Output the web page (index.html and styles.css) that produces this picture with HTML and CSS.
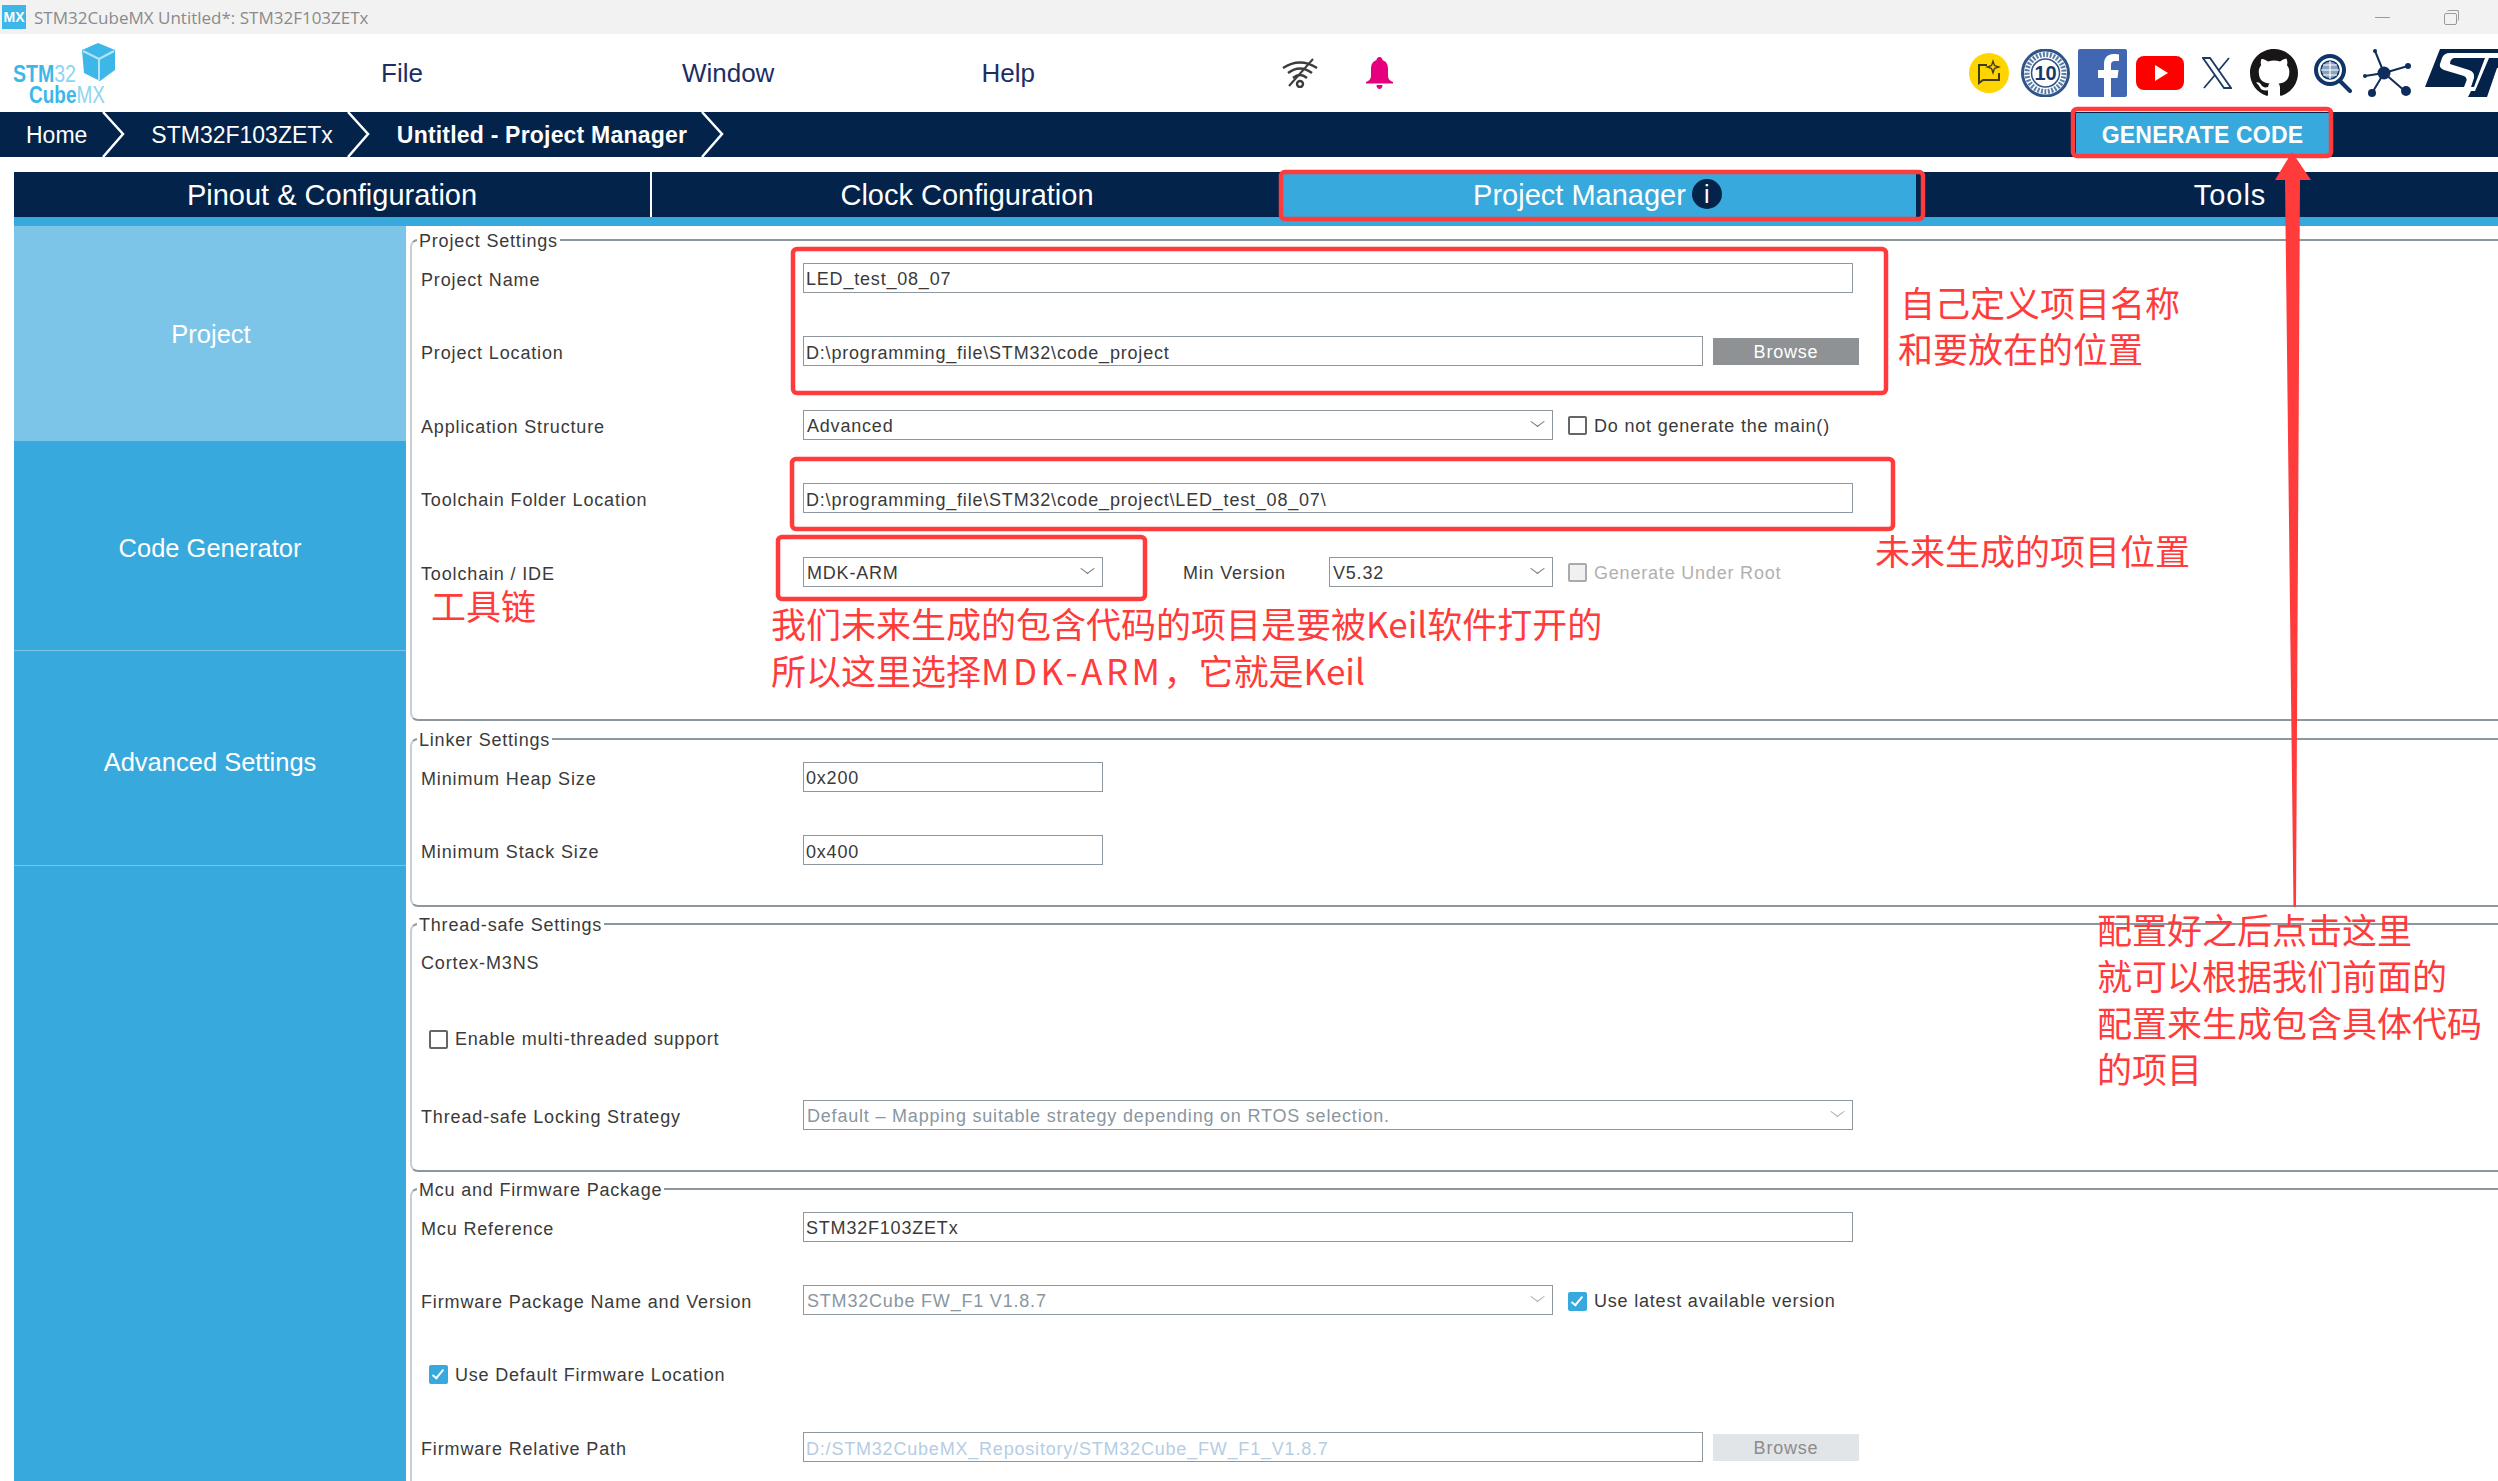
FILE: index.html
```html
<!DOCTYPE html>
<html lang="en">
<head>
    <meta charset="UTF-8">
    <meta name="viewport" content="width=device-width, initial-scale=1.0">
    <title>STM32CubeMX Untitled*: STM32F103ZETx</title>
    <link rel="stylesheet" href="styles.css">
</head>
<body>
    <div class="titlebar">
        <div class="app-icon">MX</div>
        <div class="app-title">STM32CubeMX Untitled*: STM32F103ZETx</div>
        <div class="win-min"></div>
        <div class="win-restore"></div>
    </div>

    <div class="topbar">
        <svg class="logo" width="120" height="78" viewBox="0 0 120 78">
            <path fill="#3db7e8" d="M82 16 L98 9 L115 16 L115 36 L100 47 L84 39 Z"/>
            <path fill="none" stroke="#b5e3f6" stroke-width="2" d="M83 17 L99 25 L114 17 M99 25 V46"/>
            <text x="13" y="48" class="logo-text" textLength="63" lengthAdjust="spacingAndGlyphs"><tspan font-weight="700">STM</tspan><tspan class="logo-thin">32</tspan></text>
            <text x="29" y="69" class="logo-text" textLength="76" lengthAdjust="spacingAndGlyphs"><tspan font-weight="700">Cube</tspan><tspan class="logo-thin">MX</tspan></text>
        </svg>
        <a class="menu-item menu-file">File</a>
        <a class="menu-item menu-window">Window</a>
        <a class="menu-item menu-help">Help</a>
        <svg class="wifi-icon" width="36" height="30" viewBox="0 0 36 30">
            <g fill="none" stroke="#3c3c3c" stroke-width="2.4">
                <path d="M1 10 Q18 -1 35 10"/>
                <path d="M6 15 Q18 6 30 15"/>
                <path d="M11 20 Q18 14 25 20"/>
                <path d="M31 1 L7 28" stroke-width="2"/>
                <circle cx="18" cy="26" r="3"/>
            </g>
        </svg>
        <svg class="bell-icon" width="27" height="32" viewBox="0 0 27 32">
            <path fill="#e6007e" d="M13.5 0 C15.5 0 16.5 1.5 16.5 3 C20.500 4.500 22 7.500 22 12 V19 C22 22 24 24 27 25 V26.500 H0 V25 C3 24 5 22 5 19 V12 C5 7.500 6.500 4.500 10.500 3 C10.500 1.500 11.500 0 13.500 0 Z M10.500 28 H16.500 C16.500 30.500 15 32 13.500 32 C12 32 10.500 30.500 10.500 28 Z"/>
        </svg>
        <div class="social">
            <svg width="40" height="40" viewBox="0 0 40 40">
                <ellipse cx="20" cy="20" rx="20" ry="20" fill="#ffd500"/>
                <path fill="none" stroke="#3f3a1a" stroke-width="2" d="M18 12 H10 V30 L14 27 H30 V20"/>
                <path fill="#3f3a1a" d="M24 6 L26 12 L32 14 L26 16 L24 22 L22 16 L16 14 L22 12 Z"/>
                <path fill="#ffd500" d="M24 10.500 L25 13 L27.500 14 L25 15 L24 17.500 L23 15 L20.500 14 L23 13 Z"/>
            </svg>
            <svg width="49" height="48" viewBox="0 0 49 48">
                <circle cx="24.500" cy="24" r="23" fill="#fff" stroke="#2f5487" stroke-width="3"/>
                <circle cx="24.500" cy="24" r="18.500" fill="none" stroke="#5a7ca8" stroke-width="5" stroke-dasharray="2 1.500"/>
                <circle cx="24.500" cy="24" r="14" fill="#fff" stroke="#2f5487" stroke-width="1.500"/>
                <text x="24.500" y="31" text-anchor="middle" class="badge-num">10</text>
            </svg>
            <svg width="49" height="48" viewBox="0 0 49 48">
                <rect width="49" height="48" rx="2" fill="#4267b2"/>
                <path fill="#fff" d="M26 48 V29 H20 V21 H26 V15 C26 8.500 30 5 35.500 5 C38 5 40.500 5.300 41 5.400 V12 H37 C34 12 33 13.500 33 16 V21 H40.500 L39.500 29 H33 V48 Z"/>
            </svg>
            <svg width="48" height="34" viewBox="0 0 48 34">
                <rect width="48" height="34" rx="8" fill="#ff0000"/>
                <path fill="#fff" d="M19 9 L32 17 L19 25 Z"/>
            </svg>
            <svg width="30" height="32" viewBox="0 0 30 32">
                <g fill="none" stroke="#1c3a66" stroke-width="1.800">
                    <path d="M1 1 H8 L29 31 H22 Z"/>
                    <path d="M27 1 L17 13 M13 18 L2 31"/>
                </g>
            </svg>
            <svg width="50" height="48" viewBox="0 0 16 16">
                <path fill="#181616" d="M8 0C3.580 0 0 3.580 0 8c0 3.540 2.290 6.530 5.470 7.590.4.070.55-.17.55-.38 0-.19-.01-.82-.01-1.490-2.010.37-2.530-.49-2.690-.94-.09-.23-.48-.94-.82-1.130-.28-.15-.68-.52-.01-.53.63-.01 1.080.58 1.230.82.72 1.210 1.870.87 2.330.66.07-.52.28-.87.51-1.070-1.780-.2-3.640-.89-3.640-3.950 0-.87.31-1.590.82-2.150-.08-.2-.36-1.020.08-2.120 0 0 .67-.21 2.200.82.64-.18 1.320-.27 2-.27.68 0 1.360.09 2 .27 1.530-1.040 2.200-.82 2.200-.82.44 1.100.16 1.920.08 2.120.51.56.82 1.270.82 2.150 0 3.070-1.870 3.750-3.650 3.950.29.25.54.73.54 1.480 0 1.070-.01 1.930-.01 2.200 0 .21.15.46.55.38A8.013 8.013 0 0016 8c0-4.420-3.580-8-8-8z"/>
            </svg>
            <svg width="38" height="39" viewBox="0 0 38 39">
                <circle cx="16" cy="16" r="14" fill="#fff" stroke="#0f3468" stroke-width="4"/>
                <circle cx="16" cy="16" r="9" fill="#8aa2c0" stroke="#0f3468" stroke-width="1.500"/>
                <path fill="none" stroke="#fff" stroke-width="1.200" d="M7 16 H25 M16 7 V25 M9 11 H23 M9 21 H23"/>
                <path fill="none" stroke="#0f3468" stroke-width="4" stroke-linecap="round" d="M26 27 L36 37"/>
            </svg>
            <svg width="49" height="48" viewBox="0 0 49 48">
                <g fill="none" stroke="#0f2d5c" stroke-width="2">
                    <path d="M21 24 L12 2 M21 24 L45 17 M21 24 L43 43 M21 24 L9 44 M21 24 L2 27"/>
                </g>
                <g fill="#0f2d5c">
                    <circle cx="21" cy="24" r="6.500"/>
                    <circle cx="12" cy="2" r="2"/>
                    <circle cx="45" cy="17" r="3"/>
                    <circle cx="43" cy="42" r="5"/>
                    <circle cx="9" cy="44" r="4"/>
                    <circle cx="2" cy="27" r="2"/>
                </g>
            </svg>
            <svg width="80" height="48" viewBox="0 0 80 48">
                <path fill="#03234b" d="M15 0 H80 V4 H25 Q19 4 17 9 L15 15 Q14 19 19 21 L39 27 Q43 29 41 33 L39 38 H0 Z"/>
                <path fill="#03234b" d="M29 9 H60 L49 38 H46 L49 29 Q50 23 44 21 L25 15 Q25 10 29 9 Z"/>
                <path fill="#03234b" d="M64 9 H80 V19 H72 L62 48 H43 L46 42 H50 Z"/>
            </svg>
        </div>
    </div>

    <div class="crumbs">
        <span class="crumb crumb-home">Home</span>
        <svg class="crumb-sep" width="24" height="45" viewBox="0 0 24 45"><path d="M2 0 L22 22 L2 45"/></svg>
        <span class="crumb crumb-mcu">STM32F103ZETx</span>
        <svg class="crumb-sep" width="24" height="45" viewBox="0 0 24 45"><path d="M2 0 L22 22 L2 45"/></svg>
        <span class="crumb crumb-current">Untitled - Project Manager</span>
        <svg class="crumb-sep" width="24" height="45" viewBox="0 0 24 45"><path d="M2 0 L22 22 L2 45"/></svg>
        <button class="generate">GENERATE CODE</button>
    </div>

    <div class="tabs">
        <div class="tab">Pinout &amp; Configuration</div>
        <div class="tab">Clock Configuration</div>
        <div class="tab tab-active">Project Manager<span class="info">i</span></div>
        <div class="tab tab-tools">Tools</div>
    </div>
    <div class="tabline"></div>

    <div class="main">
        <div class="sidebar">
            <div class="side-item side-active">Project</div>
            <div class="side-item side-code">Code Generator</div>
            <div class="side-item side-adv">Advanced Settings</div>
        </div>
        <div class="content">
            <div class="group group-project">
                <div class="legend">Project Settings</div>
                <div class="row">
                    <label class="row-label">Project Name</label>
                    <input class="field w-full" type="text" value="LED_test_08_07" readonly>
                </div>
                <div class="row">
                    <label class="row-label">Project Location</label>
                    <input class="field w-path" type="text" value="D:\programming_file\STM32\code_project" readonly>
                    <button class="browse">Browse</button>
                </div>
                <div class="row">
                    <label class="row-label">Application Structure</label>
                    <div class="select w-mid">Advanced<span class="chev"></span></div>
                    <span class="check"></span><span class="check-label">Do not generate the main()</span>
                </div>
                <div class="row">
                    <label class="row-label">Toolchain Folder Location</label>
                    <input class="field w-full" type="text" value="D:\programming_file\STM32\code_project\LED_test_08_07\" readonly>
                </div>
                <div class="row">
                    <label class="row-label">Toolchain / IDE</label>
                    <div class="select w-small">MDK-ARM<span class="chev"></span></div>
                    <span class="min-label">Min Version</span>
                    <div class="select w-ver">V5.32<span class="chev"></span></div>
                    <span class="check check-off"></span><span class="check-label label-off">Generate Under Root</span>
                </div>
            </div>

            <div class="group group-linker">
                <div class="legend">Linker Settings</div>
                <div class="row">
                    <label class="row-label">Minimum Heap Size</label>
                    <input class="field w-small" type="text" value="0x200" readonly>
                </div>
                <div class="row">
                    <label class="row-label">Minimum Stack Size</label>
                    <input class="field w-small" type="text" value="0x400" readonly>
                </div>
            </div>

            <div class="group group-thread">
                <div class="legend">Thread-safe Settings</div>
                <div class="row row-tall row-flat">
                    <label class="row-label">Cortex-M3NS</label>
                </div>
                <div class="row row-tall row-check row-flat">
                    <span class="check"></span><span class="check-label">Enable multi-threaded support</span>
                </div>
                <div class="row row-tall">
                    <label class="row-label">Thread-safe Locking Strategy</label>
                    <div class="select w-full select-off">Default &#8211; Mapping suitable strategy depending on RTOS selection.<span class="chev"></span></div>
                </div>
            </div>

            <div class="group group-mcu">
                <div class="legend">Mcu and Firmware Package</div>
                <div class="row">
                    <label class="row-label">Mcu Reference</label>
                    <input class="field w-full" type="text" value="STM32F103ZETx" readonly>
                </div>
                <div class="row">
                    <label class="row-label">Firmware Package Name and Version</label>
                    <div class="select w-mid select-off">STM32Cube FW_F1 V1.8.7<span class="chev"></span></div>
                    <span class="check check-on"></span><span class="check-label">Use latest available version</span>
                </div>
                <div class="row row-check">
                    <span class="check check-on"></span><span class="check-label">Use Default Firmware Location</span>
                </div>
                <div class="row">
                    <label class="row-label">Firmware Relative Path</label>
                    <input class="field w-path field-off" type="text" value="D:/STM32CubeMX_Repository/STM32Cube_FW_F1_V1.8.7" readonly>
                    <button class="browse browse-off">Browse</button>
                </div>
            </div>
        </div>
    </div>

    <!-- red markup drawn on top of the screenshot -->
    <svg class="marks" width="2498" height="1481" viewBox="0 0 2498 1481">
        <g fill="none" stroke="#ff3b3b" stroke-width="4.500">
            <rect x="793" y="249" width="1093" height="144" rx="4"/>
            <rect x="792" y="459" width="1101" height="70" rx="4"/>
            <rect x="778" y="537" width="367" height="62" rx="4"/>
            <rect x="2073" y="109" width="258" height="47" rx="4"/>
            <rect x="1281" y="172" width="642" height="47" rx="4"/>
        </g>
        <path fill="#ff3b3b" d="M2292 152 L2311 180 L2300 180 L2296 907 L2293.500 907 L2285 180 L2275 180 Z"/>
    </svg>
    <div class="note note-name">自己定义项目名称<br><span class="note-shift">和要放在的位置</span></div>
    <div class="note note-folder">未来生成的项目位置</div>
    <div class="note note-chain">工具链</div>
    <div class="note note-keil">我们未来生成的包含代码的项目是要被Keil软件打开的<br>所以这里选择<span class="note-wide">MDK-ARM</span>，它就是Keil</div>
    <div class="note note-gen">配置好之后点击这里<br>就可以根据我们前面的<br>配置来生成包含具体代码<br>的项目</div>
</body>
</html>
```

FILE: styles.css
```css
body {
    font-family: "Liberation Sans", Arial, sans-serif;
    margin: 0;
    width: 2498px;
    height: 1481px;
    overflow: hidden;
    position: relative;
    background-color: #fff;
    color: #3a3a3a;
}

/* window title */
.titlebar {
    height: 34px;
    background-color: #f2f2f2;
    display: flex;
    align-items: center;
}
.app-icon {
    width: 24px;
    height: 24px;
    margin-left: 2px;
    background-color: #3db7e8;
    color: #fff;
    font-size: 14px;
    font-weight: bold;
    line-height: 24px;
    text-align: center;
}
.app-title {
    margin-left: 8px;
    font-family: "Open Sans", sans-serif;
    font-size: 17px;
    color: #8a8a8a;
}
.win-min {
    width: 15px;
    height: 1px;
    background-color: #9a9a9a;
    margin-left: auto;
}
.win-restore {
    position: relative;
    width: 11px;
    height: 10px;
    margin-left: 54px;
    margin-right: 41px;
    margin-top: 3px;
    border: 1.5px solid #9a9a9a;
    border-radius: 2px;
}
.win-restore::after {
    content: "";
    position: absolute;
    left: 2px;
    top: -4px;
    width: 11px;
    height: 10px;
    border-top: 1.5px solid #9a9a9a;
    border-right: 1.5px solid #9a9a9a;
    border-radius: 2px;
}

/* menu row */
.topbar {
    height: 78px;
    display: flex;
    align-items: center;
}
.logo {
    flex: none;
}
.logo-text {
    font-family: "Liberation Sans", sans-serif;
    font-size: 24px;
    fill: #3db7e8;
}
.logo-thin {
    fill: #8ed4f1;
}
.menu-item {
    font-size: 26px;
    color: #1c2f63;
}
.menu-file {
    margin-left: 261px;
}
.menu-window {
    margin-left: 259px;
}
.menu-help {
    margin-left: 207px;
}
.wifi-icon {
    margin-left: 247px;
}
.bell-icon {
    margin-left: 48px;
}
.social {
    display: flex;
    align-items: center;
    margin-left: auto;
    margin-right: -7px;
}
.social svg {
    flex: none;
}
.social svg:nth-child(2) {
    margin-left: 12px;
}
.social svg:nth-child(3) {
    margin-left: 8px;
}
.social svg:nth-child(4) {
    margin-left: 9px;
}
.social svg:nth-child(5) {
    margin-left: 18px;
}
.social svg:nth-child(6) {
    margin-left: 17px;
}
.social svg:nth-child(7) {
    margin-left: 15px;
}
.social svg:nth-child(8) {
    margin-left: 11px;
}
.social svg:nth-child(9) {
    margin-left: 13px;
}
.badge-num {
    font-size: 20px;
    font-weight: bold;
    fill: #16396b;
}

/* breadcrumb */
.crumbs {
    height: 45px;
    background-color: #03234b;
    display: flex;
    align-items: center;
    color: #fff;
    font-size: 23px;
}
.crumb {
    padding-top: 2px;
}
.crumb-sep {
    flex: none;
}
.crumb-sep path {
    fill: none;
    stroke: #fff;
    stroke-width: 2.500;
}
.crumb-home {
    margin-left: 26px;
    margin-right: 14px;
}
.crumb-mcu {
    margin-left: 26px;
    margin-right: 13px;
}
.crumb-current {
    margin-left: 27px;
    margin-right: 13px;
    font-weight: bold;
    letter-spacing: 0.2px;
}
.generate {
    width: 253px;
    height: 43px;
    margin-left: auto;
    margin-right: 169px;
    background-color: #38a9dc;
    color: #fff;
    border: none;
    font-family: inherit;
    font-size: 23px;
    font-weight: bold;
    letter-spacing: 0.2px;
    padding: 2px 0 0;
}

/* main tabs */
.tabs {
    margin-top: 15px;
    margin-left: 14px;
    width: 2536px;
    height: 45px;
    display: grid;
    grid-template-columns: 638px 630px 634px 634px;
    background-color: #03234b;
}
.tab {
    display: flex;
    align-items: center;
    justify-content: center;
    padding-top: 2px;
    color: #fff;
    font-size: 29px;
    box-sizing: border-box;
}
.tab:first-child {
    border-right: 2px solid #fff;
}
.tab-active {
    background-color: #38a9dc;
    padding-right: 3px;
}
.tab-tools {
    letter-spacing: 1px;
    padding-right: 6px;
}
.info {
    width: 30px;
    height: 30px;
    margin-left: 6px;
    margin-top: -3px;
    border-radius: 50%;
    background-color: #03234b;
    color: #fff;
    font-size: 25px;
    line-height: 30px;
    text-align: center;
}
.tabline {
    height: 9px;
    margin-left: 14px;
    background-color: #38a9dc;
}

/* body */
.main {
    display: flex;
    margin-left: 14px;
    height: 1255px;
}
.sidebar {
    width: 392px;
    flex: none;
    background-color: #38a9dc;
}
.side-item {
    height: 210px;
    display: flex;
    align-items: center;
    justify-content: center;
    color: #fff;
    font-size: 25.500px;
    border-bottom: 1px solid #7cc5e8;
    box-sizing: border-box;
}
.side-active {
    height: 215px;
    padding: 2px 0 0 2px;
    background-color: #7cc5e8;
    border-bottom: none;
}
.side-code {
    padding-top: 6px;
}
.side-adv {
    height: 215px;
    padding-top: 8px;
}
.content {
    flex: 1;
    padding: 13px 0 0 4px;
    overflow: hidden;
    font-size: 18px;
    letter-spacing: 0.8px;
}
.group {
    position: relative;
    width: 2300px;
    border: 2px solid #8f979e;
    border-left-color: #c8ced3;
    border-right: none;
    border-radius: 8px 0 0 8px;
    box-sizing: border-box;
}
.group-project {
    height: 482px;
    margin-bottom: 17px;
}
.group-linker {
    height: 169px;
    margin-bottom: 16px;
}
.group-thread {
    height: 249px;
    margin-bottom: 16px;
}
.group-mcu {
    height: 400px;
}
.legend {
    position: absolute;
    top: -11px;
    left: 5px;
    padding: 0 2px;
    background-color: #fff;
    line-height: 22px;
}
.row {
    height: 73.500px;
    display: flex;
    align-items: center;
    padding-left: 9px;
}
.row-tall {
    height: 76px;
}
.row-label {
    width: 382px;
    flex: none;
    padding-top: 5px;
    letter-spacing: 0.85px;
}
.row-check {
    padding-left: 17px;
}
.row-flat .row-label, .row-flat .check-label {
    padding-top: 0;
}
.row-flat .check {
    margin-top: 0;
}
.field, .select {
    height: 30px;
    box-sizing: border-box;
    border: 1px solid #8f979e;
    background-color: #fff;
    font-family: inherit;
    font-size: 18px;
    letter-spacing: 0.8px;
    color: #3a3a3a;
    flex: none;
}
.field {
    padding: 4px 0 0 2px;
    border-radius: 0;
    outline: none;
}
.select {
    position: relative;
    line-height: 31px;
    padding-left: 3px;
}
.chev {
    position: absolute;
    right: 10px;
    top: 6px;
    width: 8px;
    height: 8px;
    border-right: 1.500px solid #777;
    border-bottom: 1.500px solid #777;
    transform: rotate(45deg) skew(-8deg, -8deg);
}
.w-full {
    width: 1050px;
}
.w-path {
    width: 900px;
}
.w-mid {
    width: 750px;
}
.w-small {
    width: 300px;
}
.w-ver {
    width: 224px;
}
.select-off {
    color: #8a96a0;
}
.select-off .chev {
    border-color: #b0b0b0;
}
.field-off {
    color: #b5cde3;
}
.browse {
    width: 146px;
    height: 27px;
    margin-left: 10px;
    padding: 3px 0 0;
    border: none;
    background-color: #8e9295;
    color: #fff;
    font-family: inherit;
    font-size: 18px;
    letter-spacing: 0.8px;
}
.browse-off {
    background-color: #e2e5e8;
    color: #8c8c8c;
}
.check {
    width: 19px;
    height: 19px;
    flex: none;
    box-sizing: border-box;
    margin-left: 15px;
    margin-top: 2px;
    border: 2px solid #666;
    border-radius: 2px;
    position: relative;
}
.row-check .check {
    margin-left: 0;
}
.check-off {
    background-color: #eef0f2;
    border-color: #aaa;
}
.check-on {
    background-color: #38a9dc;
    border-color: #38a9dc;
}
.check-on::after {
    content: "";
    position: absolute;
    left: 4px;
    top: 0;
    width: 4px;
    height: 10px;
    border-right: 2px solid #fff;
    border-bottom: 2px solid #fff;
    transform: rotate(40deg);
}
.check-label {
    margin-left: 7px;
    padding-top: 3px;
    white-space: nowrap;
}
.label-off {
    color: #b0b0b0;
}
.min-label {
    margin-left: 80px;
    padding-top: 3px;
    width: 146px;
    flex: none;
}

/* annotations over the screenshot */
.marks {
    position: absolute;
    left: 0;
    top: 0;
}
.note {
    position: absolute;
    font-family: "Noto Sans CJK SC", sans-serif;
    font-size: 35px;
    font-weight: 400;
    color: #ff3b3b;
    white-space: nowrap;
}
.note-name {
    left: 1900px;
    top: 279px;
    line-height: 46px;
}
.note-shift {
    margin-left: -2px;
}
.note-folder {
    left: 1875px;
    top: 527px;
    line-height: 46px;
}
.note-chain {
    left: 431px;
    top: 582px;
    line-height: 46px;
}
.note-keil {
    left: 771px;
    top: 599px;
    line-height: 47px;
}
.note-wide {
    letter-spacing: 3.500px;
}
.note-gen {
    left: 2097px;
    top: 906px;
    line-height: 46.300px;
}
```
